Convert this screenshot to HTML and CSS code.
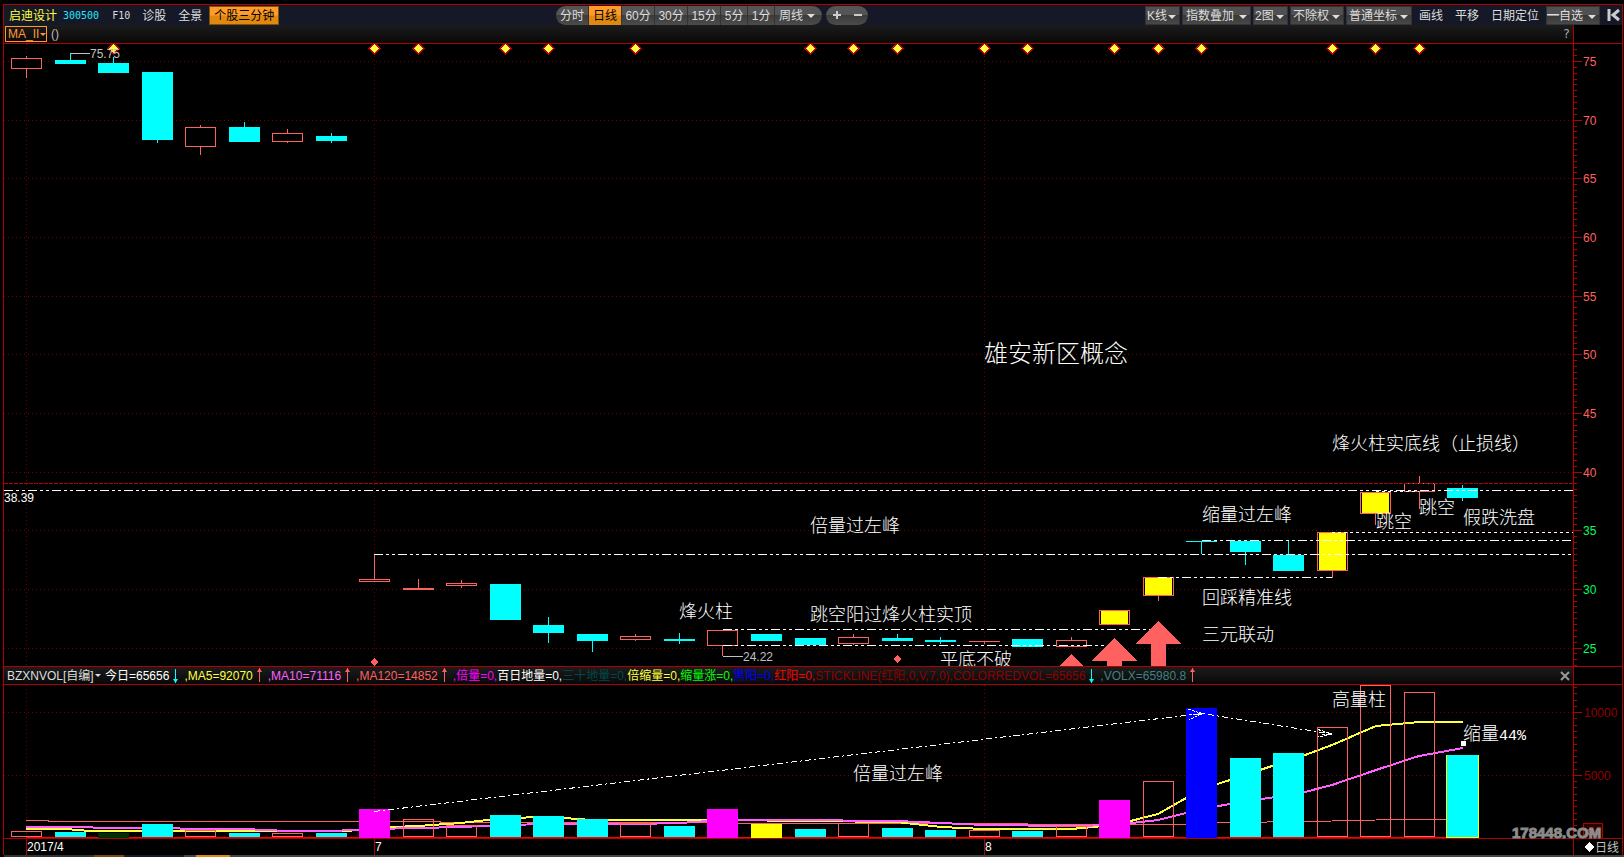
FILE: index.html
```html
<!DOCTYPE html>
<html lang="zh-CN">
<head>
<meta charset="utf-8">
<title>启迪设计 300500</title>
<link rel="stylesheet" href="styles.css">
</head>
<body>
<main class="terminal">
  <header class="toolbar">
    <div class="stock">
      <span class="stock-name">启迪设计</span>
      <span class="stock-code">300500</span>
      <button class="plain mono">F10</button>
      <button class="plain">诊股</button>
      <button class="plain">全景</button>
      <button class="promo">个股三分钟</button>
    </div>
    <nav class="center">
      <div class="periods">
        <button>分时</button><button class="active">日线</button><button>60分</button><button>30分</button><button>15分</button><button class="short">5分</button><button class="short">1分</button>
        <span class="drop drop-week"><select aria-label="周期"><option>周线</option></select></span>
      </div>
      <div class="zoomers">
        <button aria-label="放大"><svg width="10" height="10"><path d="M5 1V9M1 5H9" stroke="#ccc" stroke-width="2"/></svg></button>
        <button aria-label="缩小"><svg width="10" height="10"><path d="M1 5H9" stroke="#ccc" stroke-width="2"/></svg></button>
      </div>
    </nav>
    <div class="tools">
      <span class="drop box w-k"><select aria-label="线型"><option>K线</option></select></span>
      <span class="drop box w-index"><select aria-label="叠加"><option>指数叠加</option></select></span>
      <span class="drop box w-k"><select aria-label="图数"><option>2图</option></select></span>
      <span class="drop box w-right"><select aria-label="除权"><option>不除权</option></select></span>
      <span class="drop box w-axis"><select aria-label="坐标"><option>普通坐标</option></select></span>
      <button class="plain">画线</button>
      <button class="plain">平移</button>
      <button class="plain">日期定位</button>
      <span class="drop box w-right fav"><select aria-label="自选"><option>━自选</option></select></span>
      <button class="plain collapse" aria-label="收起"><svg width="14" height="14"><path d="M2 1V13M12 2L6 7L12 12" fill="none" stroke="#ccc" stroke-width="3"/></svg></button>
    </div>
  </header>

  <div class="indicator main-indicator">
    <span class="drop ma"><select aria-label="主图指标"><option>MA_II</option></select></span>
    <span class="params">()</span>
    <button class="help" aria-label="帮助">?</button>
  </div>

  <svg class="chart" viewBox="4 44 1618 622" role="img" aria-label="日线K线图">
    <g id="price-grid"></g>
    <g id="candles"></g>
    <path d="M70.500 60V53.500" stroke="#0ff"/>
    <path d="M70 53.500H90M723 656.500H743" stroke="#c0c0c0"/>
    <path d="M4 483.500H1573" stroke="#b00000" stroke-dasharray="4 1"/>
    <g class="study">
      <path d="M4 490.500H1573M374 554.500H1572M723 629.500H1151M723 645.500H1104M1158 577.500H1332M1202 540.500H1571"/>
      <path class="dots" d="M1332 532.500H1573M1376 491.500H1419"/>
    </g>
    <g id="signals"></g>
    <g fill="#ff6060">
      <path d="M1158.500 621L1181 644H1166V667H1151V644H1136Z"/>
      <path d="M1114.500 638L1137 661H1122V667H1107V661H1092Z"/>
      <path d="M1071.500 654L1083 666H1060Z"/>
      <path d="M374.500 658L378.500 662L374.500 666L370.500 662ZM897.500 655L901.500 659L897.500 663L893.500 659Z"/>
    </g>
    <g class="value">
      <text x="90" y="58">75.75</text>
      <text x="743" y="661">24.22</text>
      <text class="bright" x="4" y="502">38.39</text>
    </g>
    <g class="note">
      <text class="title" x="984" y="362">雄安新区概念</text>
      <text x="1332" y="450">烽火柱实底线（止损线）</text>
      <text x="810" y="532">倍量过左峰</text>
      <text x="1202" y="521">缩量过左峰</text>
      <text x="1376" y="528">跳空</text>
      <text x="1419" y="514">跳空</text>
      <text x="1463" y="524">假跌洗盘</text>
      <text x="1202" y="604">回踩精准线</text>
      <text x="1202" y="641">三元联动</text>
      <text x="679" y="618">烽火柱</text>
      <text x="810" y="621">跳空阳过烽火柱实顶</text>
      <text x="940" y="666">平底不破</text>
    </g>
    <g id="price-axis"></g>
  </svg>

  <div class="indicator vol-indicator">
    <span class="drop formula"><select aria-label="副图指标"><option>BZXNVOL[自编]</option></select></span>
    <span class="readout"><span class="white">今日=65656</span><svg width="15" height="17"><path d="M6.500 2V16" stroke="#0ff"/><path d="M4 12H9L6.500 16Z" fill="#0ff"/></svg><span class="yellow">,MA5=92070</span><svg width="15" height="17"><path d="M6.500 1V15" stroke="#ff6060"/><path d="M4 5H9L6.500 1Z" fill="#ff6060"/></svg><span class="pink">,MA10=71116</span><svg width="15" height="17"><path d="M6.500 1V15" stroke="#ff6060"/><path d="M4 5H9L6.500 1Z" fill="#ff6060"/></svg><span class="coral">,MA120=14852</span><svg width="15" height="17"><path d="M6.500 1V15" stroke="#ff6060"/><path d="M4 5H9L6.500 1Z" fill="#ff6060"/></svg><span class="magenta">,倍量=0,</span><span class="white">百日地量=0,</span><span class="teal">三十地量=0,</span><span class="yellow">倍缩量=0,</span><span class="green">缩量涨=0,</span><span class="blue">黑阳=0,</span><span class="red">红阳=0,</span><span class="maroon">STICKLINE(红阳,0,V,7,0),COLORREDVOL=65656</span><svg width="15" height="17"><path d="M6.500 2V16" stroke="#0ff"/><path d="M4 12H9L6.500 16Z" fill="#0ff"/></svg><span class="slate">,VOLX=65980.8</span><svg width="15" height="17"><path d="M6.500 1V15" stroke="#ff6060"/><path d="M4 5H9L6.500 1Z" fill="#ff6060"/></svg></span>
    <button class="help" aria-label="关闭"><svg width="10" height="10"><path d="M1 1L9 9M9 1L1 9" stroke="#999" stroke-width="2"/></svg></button>
  </div>

  <svg class="chart" viewBox="4 685 1618 170" role="img" aria-label="成交量图">
    <g id="volume-grid"></g>
    <polyline class="ma120" points="26,820.500 48,820.500 49,821.500 440,821.500 441,822.500 984,823.500 1071,824.500 1180,824.500 1224,822.500 1310,821.500 1354,820.500 1398,819.500 1460,819.500"/>
    <polyline class="ma5" points="26,829 66,829 90,831 331,831 374,830 392,827 418,826 461,823 505,818 549,817 592,820 723,820 810,821 897,822 941,827 984,829 1071,829 1115,825 1158,814 1202,789 1230,780 1275,765 1305,755 1332,745 1376,726 1419,722 1463,722"/>
    <polyline class="ma10" points="26,827 70,827 115,828 244,829 288,831 331,831 374,829 418,828 461,827 505,825 549,824 635,824 680,823 723,820 788,820 897,821 941,823 984,825 1071,826 1115,825 1158,820 1202,809 1230,804 1275,797 1305,792 1332,785 1376,770 1419,756 1463,748"/>
    <path d="M4 838.500H1622" stroke="#b00000"/>
    <path d="M26 837.500H1463" stroke="#f00"/>
    <g id="bars"></g>
    <path class="trend" d="M374 811.500L1202 713.500L1332 734"/>
    <path class="barb" d="M1188 709L1202 713.500L1189 720M1189 714H1202M1318 729.500L1332 734L1318 737M1322 734H1332"/>
    <rect x="1461" y="741" width="5" height="5" fill="#fff"/>
    <g class="note">
      <text x="853" y="780">倍量过左峰</text>
      <text x="1332" y="706">高量柱</text>
      <text x="1463" y="740">缩量<tspan class="digits">44%</tspan></text>
    </g>
    <path d="M26.500 838V855M374.500 838V855M984.500 838V855" stroke="#b00000"/>
    <g class="value">
      <text class="bright" x="27" y="851">2017/4</text>
      <text class="bright" x="375" y="851">7</text>
      <text class="bright" x="985" y="851">8</text>
    </g>
    <g id="volume-axis"></g>
    <rect x="1583.500" y="823.500" width="19" height="15" fill="#300000" stroke="#b00000"/>
    <text class="unit" x="1584" y="835">X10</text>
    <text class="site" x="1512" y="838">178448.COM</text>
    <path d="M1589.500 842L1594.500 847L1589.500 852L1584.500 847Z" fill="#fff"/>
    <text class="mode" x="1595" y="852">日线</text>
  </svg>
</main>
<footer class="tabs-edge"></footer>
<script src="chart.js"></script>
</body>
</html>
```
FILE: styles.css
```css
* { box-sizing: border-box; }

body {
  margin: 0;
  background: #000;
  color: #ddd;
  font: 12px/16px "Liberation Sans", "Noto Sans CJK SC", sans-serif;
}

button, select {
  margin: 0;
  padding: 0;
  border: 0;
  background: none;
  color: inherit;
  font: inherit;
  white-space: nowrap;
}

select { appearance: none; outline: 0; width: 100%; height: 100%; }

.terminal {
  margin: 4px 1px 0 3px;
  border: 1px solid #b00000;
  border-bottom: 0;
}

.toolbar {
  display: flex;
  justify-content: space-between;
  height: 20px;
  background: #151826;
}
.toolbar button, .toolbar select, .stock-name, .stock-code { padding-top: 1px; }

.stock, .center, .tools { display: flex; align-items: center; }
.stock { padding-left: 5px; }
.stock-name { color: #ffff40; margin-right: 6px; }
.stock-code { color: #20e8ff; margin-right: 13px; }
.stock-code, .mono { font-family: "DejaVu Sans Mono", monospace; font-size: 10px; }
.stock .plain { margin-right: 12px; }
.stock .plain:nth-last-child(2) { margin-right: 7px; }

.promo {
  width: 70px;
  height: 19px;
  border: 1px solid #80500c;
  background: linear-gradient(#ff9c28 45%, #e08810 55%);
  color: #000;
}

.center { gap: 4px; }
.periods, .zoomers {
  display: flex;
  height: 19px;
  overflow: hidden;
  border-radius: 10px;
  background: linear-gradient(#555 45%, #3c3c3c 50%, #4c4c4c);
}
.periods button { width: 33px; border-right: 1px solid #333; }
.periods .short { width: 27px; }
.periods .active { background: linear-gradient(#ff9c28 45%, #e08810 55%); color: #000; }
.zoomers { width: 42px; justify-content: center; gap: 11px; }
.zoomers button { display: flex; align-items: center; padding: 0; }

.drop { position: relative; display: block; height: 19px; }
.drop::after {
  content: "";
  position: absolute;
  right: 3px;
  top: 8px;
  border: 4px solid transparent;
  border-top-color: currentColor;
  border-bottom: 0;
  pointer-events: none;
}
.drop-week { width: 47px; padding-left: 4px; }
.drop-week::after { right: 7px; }

.tools { gap: 2px; }
.box {
  padding-left: 3px;
  border: 1px solid #333;
  background: linear-gradient(#505050 45%, #383838 50%, #484848);
}
.w-k { width: 35px; padding-left: 1px; }
.w-index { width: 69px; }
.w-axis { width: 66px; padding-left: 2px; }
.w-right { width: 54px; padding-left: 2px; }
.tools .plain { margin: 0 5px; }
.tools .collapse { display: flex; margin: 0 1px 0 5px; padding: 0; }
.tools .fav { padding-left: 0; }

.indicator {
  display: flex;
  align-items: center;
  margin-right: 48px;
  border-right: 1px solid #b00000;
  background: linear-gradient(#1c1c1c, #080808);
  position: relative;
}
.indicator::after {
  content: "";
  position: absolute;
  left: 0;
  right: -49px;
  bottom: -1px;
  border-bottom: 1px solid #b00000;
}
.main-indicator { height: 18px; margin-bottom: 1px; }
.ma {
  width: 42px;
  height: 16px;
  margin-left: 1px;
  padding-left: 2px;
  border: 1px solid #ff9830;
  color: #ff9830;
}
.ma select, .formula select { display: block; line-height: 14px; }
.ma::after { right: 0; top: 6px; border-width: 3px 3px 0; }
.params { margin-left: 4px; color: #bbb; }
.help {
  margin-left: auto;
  margin-right: 3px;
  color: #aaa;
  font-family: "DejaVu Sans Mono", monospace;
}

.vol-indicator { height: 17px; margin-top: 1px; margin-bottom: 1px; }
.vol-indicator::before {
  content: "";
  position: absolute;
  left: 0;
  right: -49px;
  top: -1px;
  border-top: 1px solid #b00000;
}
.formula { width: 97px; height: 17px; padding-left: 3px; }
.formula::after { right: 0; top: 7px; border-width: 3px 3px 0; }
.readout { display: flex; margin-left: 4px; white-space: nowrap; line-height: 18px; }
.vol-indicator .help { display: flex; }

.white { color: #fff; }
.yellow { color: #ffff40; }
.pink { color: #ff60ff; }
.coral { color: #ff6060; }
.magenta { color: #f0f; }
.teal { color: #004848; }
.green { color: #0f0; }
.blue { color: #00f; }
.red { color: #f00; }
.maroon { color: #900000; }
.slate { color: #408080; }

.chart { display: block; width: 100%; height: auto; }
.chart path, .chart line, .chart rect { shape-rendering: crispEdges; }

.grid { stroke: #6c0000; stroke-dasharray: 1 3; }
.axis { stroke: #b00000; fill: none; }
.label-high { fill: #ff6060; }
.label-low { fill: #00ff60; }
.label-volume { fill: #900000; }

.study { fill: none; stroke: #fff; stroke-dasharray: 9 3 3 3 3 3; }
.study .dots { stroke-dasharray: 3 3; }
.ma5, .ma10, .ma120 { fill: none; stroke-width: 2; shape-rendering: crispEdges; }
.ma5 { stroke: #ffff40; }
.ma10 { stroke: #ff60ff; }
.ma120 { stroke: #ff6060; stroke-width: 1; }
.trend, .barb { fill: none; stroke: #fff; stroke-dasharray: 6 3 2 3; }
.barb { stroke-dasharray: 3 1; }

.rise { fill: #000; stroke: #ff6060; }
.rise-open { fill: none; stroke: #ff6060; }
.fall { fill: #0ff; }
.signal { fill: #ffff40; stroke: #c00000; }

.value { font-size: 12px; fill: #c0c0c0; }
.bright { fill: #fff; }
.note { font: 300 18px "Noto Sans CJK SC", sans-serif; fill: #fff; }
.note .title { font-size: 24px; }
.digits { font: 15px "Liberation Mono", monospace; }
.mode { fill: #c0c0c0; font-size: 12px; }
.unit { fill: #ff6060; font-size: 9px; }
.site {
  fill: #aaa;
  fill-opacity: .85;
  stroke: #888;
  font: bold 15px "Liberation Sans", sans-serif;
}

.tabs-edge {
  height: 2px;
  margin-left: 4px;
  background: linear-gradient(90deg, #333 90px, #7a4a10 90px, #7a4a10 120px, #1c1824 120px, #1c1824 180px, #444 180px, #444 192px, #e08810 192px, #e08810 226px, #444 226px);
}
```
FILE: chart.js
```js
const NS = "http://www.w3.org/2000/svg";
const center = i => Math.round(26 + 43.53 * i) + 0.5;

function draw(parent, tag, attrs, text) {
  const node = document.createElementNS(NS, tag);
  for (const key in attrs) node.setAttribute(key, attrs[key]);
  if (text !== undefined) node.textContent = text;
  document.getElementById(parent).appendChild(node);
}

const line = (parent, cls, d) => draw(parent, "path", { class: cls, d });

// kind, high, body top, body bottom, low
const candles = [
  ["r", 56, 58, 69, 78], ["c", 60, 60, 64, 64], ["c", 57, 63, 73, 73], ["c", 72, 72, 140, 143],
  ["r", 125, 127, 147, 155], ["c", 122, 127, 142, 142], ["r", 129, 133, 142, 143], ["c", 133, 136, 141, 143],
  ["r", 554, 579, 582, 582], ["r", 579, 588, 590, 590], ["r", 580, 583, 586, 588], ["c", 584, 584, 620, 620],
  ["c", 617, 625, 633, 643], ["c", 634, 634, 641, 652], ["r", 634, 636, 640, 641], ["c", 633, 639, 641, 644],
  ["r", 630, 630, 646, 656], ["c", 634, 634, 641, 641], ["c", 638, 638, 645, 645], ["r", 634, 637, 644, 645],
  ["c", 634, 638, 641, 641], ["c", 637, 640, 642, 644], ["r", 641, 641, 642, 644], ["c", 639, 639, 647, 647],
  ["r", 637, 640, 647, 647], ["y", 610, 610, 625, 625], ["y", 577, 577, 596, 601], ["c", 541, 541, 542, 554],
  ["c", 541, 541, 552, 565], ["c", 541, 555, 571, 571], ["y", 532, 532, 571, 578], ["y", 492, 492, 514, 525],
  ["r", 476, 483, 492, 509], ["c", 485, 488, 498, 501]
];

candles.forEach(([kind, high, top, bottom, low], i) => {
  const x = center(i);
  const color = kind === "c" ? "#0ff" : "#ff6060";
  draw("candles", "path", { stroke: color, d: `M${x} ${high}V${low}` });
  if (kind === "c") {
    draw("candles", "rect", { class: "fall", x: x - 15.5, y: top, width: 31, height: bottom - top });
    return;
  }
  if (bottom - top < 2) {
    draw("candles", "path", { stroke: color, d: `M${x - 15.5} ${top + 0.5}H${x + 15.5}` });
    return;
  }
  draw("candles", "rect", { class: "rise", x: x - 15, y: top + 0.5, width: 30, height: bottom - top - 1 });
  if (kind === "y") {
    draw("candles", "rect", { fill: "#ff0", x: x - 13.5, y: top + 1, width: 27, height: bottom - top - 2 });
  }
});

// color ("r" for a hollow bar), top
const bars = [
  ["r", 831], ["#0ff", 832], ["#003000", 833], ["#0ff", 824], ["r", 830], ["#0ff", 833], ["r", 833], ["#0ff", 833],
  ["#f0f", 809], ["r", 819], ["r", 825], ["#0ff", 815], ["#0ff", 816], ["#0ff", 819], ["r", 823], ["#0ff", 826],
  ["#f0f", 809], ["#ff0", 824], ["#0ff", 829], ["r", 823], ["#0ff", 828], ["#0ff", 830], ["r", 830], ["#0ff", 831],
  ["r", 826], ["#f0f", 800], ["r", 781], ["#00f", 708], ["#0ff", 758], ["#0ff", 753], ["r", 727], ["r", 685],
  ["r", 692], ["last", 755]
];

bars.forEach(([color, top], i) => {
  const x = center(i) - 15.5;
  if (color === "r") {
    draw("bars", "rect", { class: "rise-open", x: x + 0.5, y: top + 0.5, width: 30, height: 836 - top });
  } else if (color === "last") {
    draw("bars", "rect", { fill: "#ff0", x: x - 1, y: top, width: 33, height: 838 - top });
    draw("bars", "rect", { class: "fall", x, y: top, width: 31, height: 837 - top });
  } else {
    const base = color === "#0ff" ? 837 : 838;
    draw("bars", "rect", { fill: color, x, y: top, width: 31, height: base - top });
  }
});

[2, 8, 9, 11, 12, 14, 18, 19, 20, 22, 23, 25, 26, 27, 30, 31, 32].forEach(i => {
  draw("signals", "path", { class: "signal", d: `M${center(i)} 43L${center(i) + 5.5} 48.500L${center(i)} 54L${center(i) - 5.5} 48.500Z` });
});

[26.5, 374.5, 984.5].forEach(x => {
  line("price-grid", "grid", `M${x} 44V666`);
  line("volume-grid", "grid", `M${x} 685V838`);
});

line("price-axis", "axis", "M1573.500 44V666");
for (let k = -3; k <= 103; k++) {
  const y = Math.round(61 + k * 5.865) + 0.5;
  const major = k % 10 === 0;
  line("price-axis", "axis", `M1573 ${y}H${major ? 1582 : 1577}`);
  if (!major) continue;
  const price = 75 - k / 2;
  line("price-grid", "grid", `M4 ${y}H1573`);
  draw("price-axis", "text", { class: price > 35 ? "label-high" : "label-low", x: 1583, y: y + 4.5 }, price);
}

line("volume-axis", "axis", "M1573.500 685V855");
for (let k = 0; k < 24; k++) {
  const y = Math.round(687 + k * 6.28) + 0.5;
  const major = k === 4 || k === 14;
  line("volume-axis", "axis", `M1573 ${y}H${major ? 1582 : 1577}`);
  if (!major) continue;
  line("volume-grid", "grid", `M4 ${y}H1573`);
  draw("volume-axis", "text", { class: "label-volume", x: 1584, y: y + 4.5 }, k === 4 ? "10000" : "5000");
}
```
